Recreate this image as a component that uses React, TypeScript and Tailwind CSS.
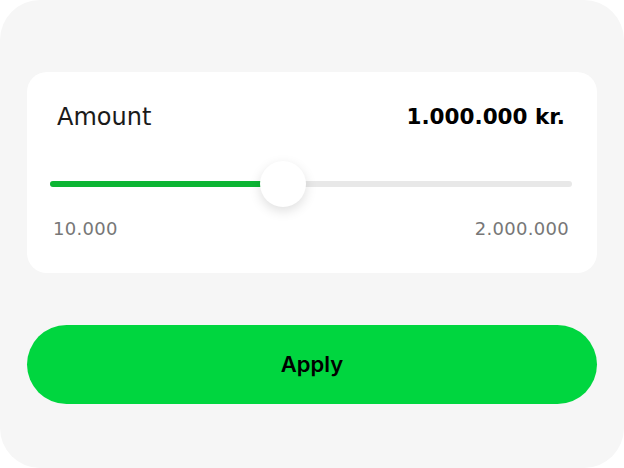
export default function App() {
  const pct = 44.6;
  return (
    <div className="w-[624px] h-[468px] bg-white" style={{ fontFamily: "'DejaVu Sans', sans-serif" }}>
      <div className="w-full h-full bg-[#f6f6f6] rounded-[40px] px-[27px] pt-[72px] flex flex-col">
        <div className="bg-white rounded-[20px] h-[201px] pl-[23px] pr-[25px] pt-[31px] flex flex-col">
          <div className="flex items-center justify-between pl-[7px] pr-[7px] h-[28px]">
            <span className="text-[24px] leading-[28px] text-[#1a1a1a]">Amount</span>
            <span className="text-[21.5px] leading-[28px] font-bold text-black">1.000.000 kr.</span>
          </div>
          <div className="relative h-[46px] mt-[30px]">
            <div className="absolute left-0 right-0 top-[20px] h-[6px] rounded-full bg-[#e8e8e8]" />
            <div className="absolute left-0 top-[20px] h-[6px] rounded-full bg-[#0cb533]" style={{ width: `${pct}%` }} />
            <div
              className="absolute top-0 w-[46px] h-[46px] -ml-[23px] rounded-full bg-white shadow-[0_4px_12px_rgba(0,0,0,0.13)]"
              style={{ left: `${pct}%` }}
            />
          </div>
          <div className="flex justify-between mt-[11px] pl-[3px] pr-[3px] text-[18px] leading-[22px] text-[#777] tracking-[0.3px]">
            <span>10.000</span>
            <span>2.000.000</span>
          </div>
        </div>
        <button
          className="mt-[52px] h-[79px] w-full rounded-full bg-[#00d63f] text-[22px] font-semibold text-black"
          style={{ fontFamily: "Inter, sans-serif" }}
        >
          Apply
        </button>
      </div>
    </div>
  );
}
